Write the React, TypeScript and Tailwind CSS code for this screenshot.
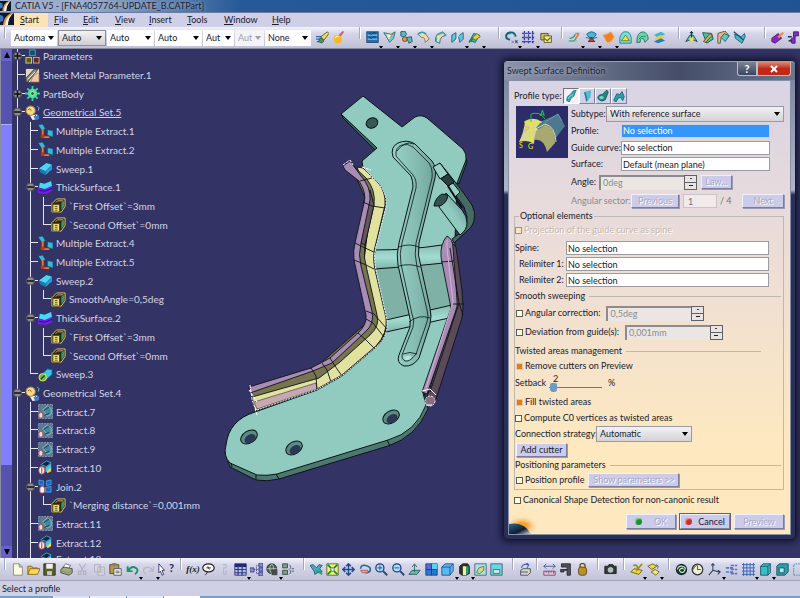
import { ReactNode } from "react";
import { clsx } from "clsx";

type Guide = "line" | "tee" | "end";

interface TreeRow {
  label:  string;
  icon:   string;
  guides: Guide[];
  knot?:  "+" | "-";
  active?: boolean;
}

const TREE: TreeRow[] = [
  { label: "Parameters",              icon: "params",  guides: ["tee"], knot: "+" },
  { label: "Sheet Metal Parameter.1", icon: "sheet",   guides: ["tee"] },
  { label: "PartBody",                icon: "gear",    guides: ["tee"], knot: "+" },
  { label: "Geometrical Set.5",       icon: "geoset",  guides: ["tee"], knot: "-", active: true },
  { label: "Multiple Extract.1",      icon: "mextract", guides: ["line", "tee"] },
  { label: "Multiple Extract.2",      icon: "mextract", guides: ["line", "tee"] },
  { label: "Sweep.1",                 icon: "sweep",   guides: ["line", "tee"] },
  { label: "ThickSurface.1",          icon: "thick",   guides: ["line", "tee"], knot: "-" },
  { label: "`First Offset`=3mm",      icon: "param",   guides: ["line", "line", "tee"] },
  { label: "`Second Offset`=0mm",     icon: "param",   guides: ["line", "line", "end"] },
  { label: "Multiple Extract.4",      icon: "mextract", guides: ["line", "tee"] },
  { label: "Multiple Extract.5",      icon: "mextract", guides: ["line", "tee"] },
  { label: "Sweep.2",                 icon: "sweep",   guides: ["line", "tee"], knot: "-" },
  { label: "SmoothAngle=0,5deg",      icon: "param",   guides: ["line", "line", "end"] },
  { label: "ThickSurface.2",          icon: "thick",   guides: ["line", "tee"], knot: "-" },
  { label: "`First Offset`=3mm",      icon: "param",   guides: ["line", "line", "tee"] },
  { label: "`Second Offset`=0mm",     icon: "param",   guides: ["line", "line", "end"] },
  { label: "Sweep.3",                 icon: "sweep3",  guides: ["line", "end"] },
  { label: "Geometrical Set.4",       icon: "geoset",  guides: ["tee"], knot: "-" },
  { label: "Extract.7",               icon: "extract", guides: ["line", "tee"] },
  { label: "Extract.8",               icon: "extract", guides: ["line", "tee"] },
  { label: "Extract.9",               icon: "extract", guides: ["line", "tee"] },
  { label: "Extract.10",              icon: "extractOn", guides: ["line", "tee"] },
  { label: "Join.2",                  icon: "join",    guides: ["line", "tee"], knot: "-" },
  { label: "`Merging distance`=0,001mm", icon: "param", guides: ["line", "line", "end"] },
  { label: "Extract.11",              icon: "extract", guides: ["line", "tee"] },
  { label: "Extract.12",              icon: "extractOn", guides: ["line", "tee"] },
];

// All glyphs are drawn on a 16x16 grid
const GLYPHS: Record<string, ReactNode> = {
  // tree
  params: <><rect x="5" y="1" width="6" height="6" fill="#164e63" stroke="#22b8b0" /><rect x="1" y="9" width="6" height="6" fill="#5a5a1a" stroke="#d8d060" /><rect x="9" y="9" width="6" height="6" fill="#5a2a1a" stroke="#e8a080" /></>,
  sheet: <><rect x="1" y="1" width="14" height="14" fill="#e8d8b8" /><path d="M1 11 10 1h4L3 15H1z" fill="#8a8a80" stroke="#3a3a30" /><path d="M8 10 13 5l2 2v8H6z" fill="#f4c4a4" stroke="#a06040" strokeWidth=".7" /><path d="m3 12 8-8" stroke="#fff" /></>,
  gear: <><path d="M8 0v16M0 8h16M2.500 2.500l11 11M13.500 2.500l-11 11" stroke="#3fd09a" strokeWidth="2" /><circle cx="8" cy="8" r="5" fill="#4fe0a8" /><circle cx="8" cy="8" r="2" fill="#1f5a50" stroke="#d8f070" /></>,
  geoset: <><path d="M5 11 8 16l6-1-1-5z" fill="#f4f4f4" /><circle cx="6" cy="6" r="5" fill="#f4d890" stroke="#a07828" /><path d="M3 5q2-2 4 1M9 9l4 4" stroke="#905810" fill="none" /><path d="m9 12 6-1v4l-4 1z" fill="#3a7ad8" /><path d="m13 1 2 2-1 3" stroke="#60c0f0" fill="none" /></>,
  mextract: <><path d="m0 1 5-1 3 5-4 2z" fill="#38b8d8" stroke="#0a4a68" strokeWidth=".7" /><path d="M5 5v9h7" stroke="#f07828" strokeWidth="2" fill="none" /><circle cx="5" cy="13" r="2" fill="#c83018" /><path d="m10 6 6 1v7l-6-2z" fill="#38b8d8" stroke="#0a4a68" strokeWidth=".7" /></>,
  sweep: <><path d="M1 8 9 2l6 2-7 7z" fill="#48d8f4" /><path d="m1 8 7 3v4l-6-3z" fill="#1c78b0" /><path d="m8 11 7-7v5l-7 6z" fill="#2898d0" /></>,
  sweep3: <><path d="M3 9 10 2l5 1v5l-8 7z" fill="#38c8e8" stroke="#106888" /><circle cx="5" cy="11" r="4" fill="#78b848" stroke="#e8e068" /><path d="m3 13 4-4" stroke="#204818" strokeWidth="1.500" /></>,
  thick: <><path d="m2 3 5 1 7-3 1 6-6 3-8-2z" fill="#48d8f4" /><path d="m0 8 6 2 9-4v6l-6 3-9-1z" fill="#7020e0" /><path d="m1 11 6 1 8-3" stroke="#2808a0" fill="none" /></>,
  param: <><path d="M1 6 6 1h9v8l-4 6H1z" fill="#2a2a10" stroke="#e0d068" /><rect x="2" y="7" width="7" height="8" fill="#f0e888" stroke="#5a4a10" /><path d="M4 9h3M4 11h3M4 13h3" stroke="#5a4a10" /><path d="m11 5 3-2v6l-3 4z" fill="#389078" /><path d="m5 5 2-2h6" stroke="#f0a080" fill="none" /></>,
  extract: <><rect x=".5" y=".5" width="15" height="15" fill="#5a7a90" stroke="#8a98b0" strokeDasharray="2 1" /><path d="m5 6 5-4 4 3v6l-4 2z" fill="#3f8a9a" stroke="#b8c8d8" strokeWidth=".7" /><path d="m6 7 6-4M7 12l5-2" stroke="#1a3a50" /><rect x="1" y="9" width="4" height="6" rx="2" fill="#f0d8d8" stroke="#a04848" strokeWidth=".7" /></>,
  extractOn: <><path d="m3 5 6-4 5 2-5 4z" fill="#102838" stroke="#38a8d8" /><path d="m8 8 6-4v5l-6 4z" fill="#48c8e8" /><path d="m9 12 5-4v4l-4 2z" fill="#f0d050" /><rect x="1" y="7" width="6" height="8" rx="3" fill="#f8f0f0" stroke="#b06060" /><path d="M4 8v6" stroke="#c02020" /></>,
  join: <><path d="m1 1 5 1v5L1 6zM9 2l5-1v5L9 7zM8 9l6-1v6H8z" fill="#1868c8" stroke="#58b8f8" strokeWidth=".7" /><rect x="2" y="8" width="5" height="7" rx="2" fill="#f8f0f0" stroke="#b06060" /></>,
  // graphic toolbar
  brush: <><path d="M0 7h9M0 10h8M1 13h8" stroke="#2868c8" strokeWidth="1.500" /><path d="m6 7 8-6 2 2-6 8z" fill="#e8d868" stroke="#5a5010" /><path d="m5 8 5 4-3 3-4-2z" fill="#489060" stroke="#204828" strokeWidth=".7" /></>,
  paint: <><path d="m7 6 6-6 2 1-5 7z" fill="#d85878" /><circle cx="7" cy="10" r="5" fill="#f8b820" /><path d="M4 9q1-3 4-2" stroke="#fff0a0" strokeWidth="1.500" fill="none" /></>,
  selection: <><rect x="1" y="1" width="14" height="13" fill="#2c6cb0" stroke="#143c68" /><path d="M2 5h12M2 10h12" stroke="#58d0f0" strokeWidth="1.500" /><path d="M4 3q3 2 4 0t4 0M4 8q3 2 4 0t4 0" stroke="#102840" fill="none" /></>,
  flag: <><path d="m1 2 9 2 5-3-2 8-5 5-2-4z" fill="#68d0c0" stroke="#286878" /><path d="m4 4 8 1-5 5z" fill="#f8f0b0" /><path d="m9 8 4-6" stroke="#d04828" /></>,
  pieces: <><path d="m1 1 5-1 2 4-3 4-4-2z" fill="#58b8c8" stroke="#204858" /><circle cx="6" cy="10" r="3" fill="#e89048" stroke="#704018" /><path d="m8 8 6-1 1 6-4 2z" fill="#58b8c8" stroke="#204858" /></>,
  sheetA: <><path d="M1 4q6-5 10 0l4 6-5 4q0-7-4-6z" fill="#f8d8a0" stroke="#607078" /><path d="M1 4q6-5 10 0" stroke="#28a0b0" strokeWidth="2" fill="none" /></>,
  sheetB: <><path d="m4 4 7-3 4 4-5 2q-3 2-3 8L2 13Q1 8 4 4z" fill="#f8d8a0" stroke="#286068" /><path d="m4 5 7-3 4 4M3 8v5" stroke="#28b0b8" strokeWidth="1.500" fill="none" /></>,
  mirror: <><path d="m1 5 5-3v8l-5 4zM9 6l6-4v8l-4 4z" fill="#58c8e0" stroke="#205878" /><path d="m6 13 4-9" stroke="#e0f8ff" /></>,
  blend: <><path d="m2 12 5-9 7 2-5 9z" fill="#38b0c0" stroke="#186068" /><path d="m5 9 6-6 4 4-6 4z" fill="#f0d030" stroke="#487018" /><path d="M1 14q4-2 5-6" stroke="#308028" strokeWidth="2" fill="none" /></>,
  rotate: <><path d="M13 7Q12 1 6 2T2 9l4 2" stroke="#186078" strokeWidth="2.500" fill="none" /><path d="M5 5q4-4 7 1" stroke="#48c0e0" fill="none" /><path d="m8 12 3 3m0-3-3 3m5 0v-4l2 4v-4" stroke="#5060a0" strokeWidth=".8" /></>,
  dots: <path d="M3 0v16M8 0v16M13 0v16M0 3h16M0 8h16M0 13h16" stroke="#3840a0" strokeWidth="1.600" strokeDasharray="3 1" />,
  snap: <><path d="M1 3h9v8H1z" fill="#c8c050" stroke="#48480c" /><path d="M5 6h9v8H5z" fill="#f4f0a0" stroke="#48480c" /><path d="m5 9 4 3 4-4" stroke="#806010" strokeWidth="1.500" fill="none" /></>,
  sketch: <><path d="M1 12q8 2 9-4M2 9q5 0 7-5" stroke="#289878" strokeWidth="1.500" fill="none" /><path d="M9 3h5M13 4l-4 6" stroke="#d08048" strokeWidth="2" /><path d="m3 13 8-1" stroke="#70c878" /></>,
  revolve: <><path d="M2 4q6-6 12 0l-3 4H5z" fill="#48b8d8" stroke="#185878" /><path d="m4 13 4-5 4 5z" fill="#c04828" stroke="#601808" /><path d="M1 8q7 3 14 0" stroke="#185878" fill="none" /></>,
  orange: <path d="M1 5q6-1 10-4l4 6q-3 8-9 7z" fill="#f08020" stroke="#f8b060" />,
  dome: <><path d="M1 15V8q3-8 7-7 5-1 7 7v7z" fill="#78e0d8" stroke="#187888" /><path d="m3 12 5-7 5 7z" fill="#f0e040" stroke="#607818" /></>,
  domeB: <><path d="M1 14q0-13 8-13 6 2 6 9l-4 4q-1-6-4-5-2 1-2 5z" fill="#68d8a0" stroke="#186850" /><path d="M4 10q2-5 8-3" stroke="#187888" fill="none" /></>,
  stripes: <><path d="m1 5 9-4 5 3-9 4z" fill="#38b8d8" /><path d="m1 9 9-4 5 3-9 4z" fill="#f0d030" /><path d="m1 13 9-4 5 3-9 3z" fill="#2878c0" /></>,
  axis: <><path d="m1 13 5-8h4l5 8-7-3z" fill="#58c8c8" stroke="#183848" /><circle cx="8" cy="10" r="2.500" fill="#f0e040" /><path d="M8 0v8M6 2h4" stroke="#183848" strokeWidth="1.300" /></>,
  trimA: <><path d="m2 2 11 1 2 7-8 5z" fill="#48c0b0" stroke="#184840" /><path d="m3 13 8-10 3 2-8 9z" fill="#d8b048" stroke="#584010" /></>,
  trimB: <><path d="m1 3 9-3 5 6-5 3-5-1-1 7H1z" fill="#f0b080" stroke="#305850" /><path d="m5 8 4-5 6 3-5 7z" fill="#58c8c0" stroke="#185868" /></>,
  trimC: <><path d="m2 4 8 3 4-4 1 4-4 8-8-6z" fill="#48b8d0" stroke="#185068" /><path d="m1 1 12 10" stroke="#185068" strokeWidth="1.500" /></>,
  purple: <><path d="m1 9 8-6 4 6-8 6-4-2z" fill="#8828c0" stroke="#401068" /><path d="m8 7 6-6 2 2-6 6z" fill="#f09048" /></>,
  purpleB: <><path d="M8 1h6v5h-4v9H6q-4-5 2-7z" fill="#8030c0" stroke="#401068" /><path d="M1 7h5M2 12h4" stroke="#203860" strokeWidth="2" /></>,
  // standard toolbar
  newDoc: <path d="M3 1h7l4 4v10H3z M10 1v4h4" fill="#fffce0" stroke="#808060" />,
  open: <><path d="M1 14V4h5l1 2h6v3" fill="#e8b830" stroke="#806010" /><path d="m1 14 3-7h12l-3 7z" fill="#f8d858" stroke="#806010" /></>,
  save: <><path d="M1 1h14v14H1z" fill="#586028" stroke="#202808" /><path d="M4 1h8v6H4z" fill="#f0f0f0" /><path d="M5 10h6v5H5z" fill="#c8c8d0" /></>,
  print: <><path d="m3 6 4-5 6 2-3 5z" fill="#fff" stroke="#606060" /><path d="m1 8 4-3 10 2v5l-4 3-10-3z" fill="#a8a888" stroke="#404030" /><path d="m2 10 9 2 4-4" stroke="#60a050" fill="none" /></>,
  cut: <path d="m4 1 5 9m3-9L6 10M3 10h3v4H3zm6 0h3v4H9z" fill="none" stroke="#b0b0c0" strokeWidth="1.300" />,
  copy: <path d="M2 2h7v9H2zM6 5h8v10H6zM8 8h4M8 11h4" fill="#d8d8e0" stroke="#a8a8b8" />,
  paste: <><path d="M1 2h11v11H1z" fill="#b89848" stroke="#504010" /><path d="M4 0h5v4H4z" fill="#808080" /><path d="M6 7h9v8H6z" fill="#f8f8e8" stroke="#404060" /><path d="M8 10h5M8 12h5" stroke="#404060" /></>,
  undo: <path d="M2 4v6h6M3 9q4-6 9-3t-1 8" fill="none" stroke="#209070" strokeWidth="2.300" />,
  redo: <path d="M14 4v6H8m5-1Q9 3 4 6t1 8" fill="none" stroke="#b8b8c8" strokeWidth="1.600" />,
  help: <path d="m1 1 7 8H5l2 5-2 1-2-5-2 2z" fill="#fff" stroke="#202060" />,
  chat: <><ellipse cx="8" cy="6" rx="7" ry="5" fill="#fff" stroke="#202020" strokeWidth="1.500" /><path d="m7 11-3 4M5 6h6M7 4l2 4" stroke="#202020" /></>,
  clip: <path d="M6 2h4v4H7v8h3V9" fill="none" stroke="#b0b0c0" />,
  table: <><path d="M1 1h14v14H1z" fill="#b8c0e8" stroke="#202868" /><path d="M1 1h14v4H1z" fill="#202878" /><path d="M1 8h14M1 12h14M5 3v12M10 3v12" stroke="#303890" strokeWidth="1.500" /></>,
  graph: <><path d="M4 8h4M12 3H8v10h4M8 8h4" fill="none" stroke="#4048a0" strokeDasharray="2 1" /><path d="M0 6h5v5H0zM11 0h5v5h-5zM11 6h5v4h-5zM11 11h5v5h-5z" fill="#8890c8" stroke="#303880" /></>,
  globeLock: <><circle cx="7" cy="7" r="6" fill="#486058" stroke="#202020" /><path d="M1 7h12M7 1q-5 6 0 12M7 1q5 6 0 12" stroke="#c0d0c0" fill="none" /><path d="M7 8h7v7H7z" fill="#484848" /></>,
  equiv: <><path d="M2 1h6v5H2zM2 9h6v5H2z" fill="#80a088" stroke="#284838" /><path d="M10 2q4 3 0 6 4 3 0 6M13 7h3M13 10h3" fill="none" stroke="#405068" /></>,
  fly: <><path d="m0 3 4-1 4 4 3-4 4 1-3 4 3 4-6 1-3 2-1-4z" fill="#48a8c0" stroke="#185070" /><path d="m8 9 7 5" stroke="#20a060" strokeWidth="2" /></>,
  fit: <><path d="M1 1h14v14H1z" fill="#f0f078" stroke="#506018" /><path d="m2 2 4 4m8-4-4 4M2 14l4-4m8 4-4-4" stroke="#208030" strokeWidth="2" /><path d="M6 6h4v4H6z" fill="#fff" stroke="#208030" /></>,
  pan: <path d="M8 1v14M1 8h14M5 4l3-3 3 3M5 12l3 3 3-3M4 5 1 8l3 3m8-6 3 3-3 3" fill="none" stroke="#204890" strokeWidth="1.800" />,
  orbit: <><path d="M2 7q0-5 6-4t6 5-6 4" fill="none" stroke="#286890" strokeWidth="2" /><path d="M2 9h9v3H4z" fill="#f0a0a0" stroke="#883030" strokeWidth=".7" /></>,
  zoomIn: <><circle cx="6" cy="6" r="5" fill="#a8e0f8" stroke="#203880" strokeWidth="1.500" /><path d="M3 6h6M6 3v6" stroke="#203880" /><path d="m10 10 5 5" stroke="#284878" strokeWidth="2.500" /></>,
  zoomOut: <><circle cx="6" cy="6" r="5" fill="#a8e0f8" stroke="#203880" strokeWidth="1.500" /><path d="M3 6h6" stroke="#203880" /><path d="m10 10 5 5" stroke="#284878" strokeWidth="2.500" /></>,
  normal: <><path d="m1 14 4-5h10l-4 5z" fill="#68b8b0" stroke="#205858" /><path d="M8 11V2M5 5l3-4 3 4" stroke="#205858" fill="none" /></>,
  multi: <><path d="M1 1h14v14H1z" fill="#2878d8" stroke="#183878" /><path d="M8 1h7v7H8z" fill="#58d0f0" /><path d="M2 2h5v5H2z" fill="#7858d0" /><path d="M1 8h14M8 1v14" stroke="#183878" /></>,
  cube: <path d="m1 5 4-4h10v9l-4 5H1zM1 5h10v10M11 5l4-4" fill="#58b8f0" stroke="#204888" />,
  shaded: <><path d="m2 4 4-3h6l2 3v9l-4 2H5l-3-2z" fill="#303020" stroke="#202018" /><path d="M6 4h4v11H6z" fill="#e8f0a8" /><path d="M10 4h3v8l-3 3z" fill="#28a080" /></>,
  viewA: <><path d="M1 1h14v14H1z" fill="#b0e0e8" stroke="#405868" /><path d="m3 12 3-6 6-2v5l-5 4z" fill="#e0d878" stroke="#288060" /></>,
  viewB: <><path d="M1 1h14v14H1z" fill="#68d8e8" stroke="#405868" /><path d="M4 8h8v5H4z" fill="#c8e8d8" stroke="#287080" /></>,
  turn: <><path d="m2 9 3-2h9v5l-3 3H2z" fill="#d8d8c8" stroke="#404040" /><path d="M3 6q2-6 8-4M9 0l3 2-2 4M2 11h9" fill="none" stroke="#3060b0" strokeWidth="1.300" /></>,
  measure: <><path d="M1 10h14v5H1z" fill="#e8c8d0" stroke="#803858" /><path d="M4 10v2M7 10v3M10 10v2M13 10v3M1 4h14M4 1 1 4l3 3m8-6 3 3-3 3" fill="none" stroke="#384898" /></>,
  caliper: <path d="M3 1h11v14h-4V9H6v2H2V8h8V5H3z" fill="#505058" stroke="#202028" />,
  weight: <><path d="M5 5V2q3-3 6 0v3" fill="none" stroke="#604010" strokeWidth="1.500" /><rect x="3" y="5" width="10" height="10" rx="3" fill="#b89028" stroke="#584008" /></>,
  camera: <><path d="M1 4h4l1-2h5l1 2h3v9H1z" fill="#383838" stroke="#181818" /><circle cx="8" cy="8.500" r="3" fill="#a0c8c8" stroke="#d0d0d0" /></>,
  layerA: <><path d="m1 11 4-4 10 2-4 5z" fill="#e8d838" stroke="#605810" /><path d="M4 3q6-2 5 5l6-7" fill="none" stroke="#a08818" strokeWidth="2" /></>,
  layerB: <><path d="m1 4 6-3 5 3-6 4z" fill="#e8d838" stroke="#605810" /><path d="m5 11 5-3 5 3-4 4z" fill="#f0e888" stroke="#605810" /><path d="M11 2q4 1 2 5" fill="none" stroke="#384880" /></>,
  swirl: <><circle cx="8" cy="8" r="7" fill="#183030" /><path d="M3 8q1-5 6-4t3 5-5 2 0-4 3 1" fill="none" stroke="#c8f0c8" strokeWidth="1.500" /></>,
  clock: <><circle cx="8" cy="8" r="6.500" fill="#f0f0d8" stroke="#303030" strokeWidth="1.500" /><path d="M8 3v5h4M3 8q0-4 4-5" stroke="#303030" fill="none" /></>,
  triad: <path d="M6 1v8l8 2M6 9l-5 6M4 3l2-2 2 2m4 6 3 2-3 3" fill="none" stroke="#304060" strokeWidth="1.300" />,
  layers: <path d="M7 3h8M7 8h8M7 13h8M1 6h9M1 11h9" stroke="#5878c0" strokeWidth="2" strokeDasharray="4 1" />,
  grid: <path d="M2 0v16M6 0v16M10 0v16M14 0v16M0 2h16M0 6h16M0 10h16M0 14h16" stroke="#3868c0" strokeWidth="1.200" />,
  box: <path d="M2 4 5 1h9v11l-3 3H2zM2 4h9v11M11 4l3-3" fill="#38c0c8" stroke="#184858" />,
  boxB: <><path d="M1 4 4 1h11v10l-4 4H1z" fill="#28a0a8" stroke="#184858" /><path d="M4 6h6v6H4z" fill="#a8f0f0" stroke="#184858" /></>,
  frame: <path d="M2 3 5 1h10M2 3v12h9" fill="none" stroke="#58a8c0" strokeWidth="1.500" strokeDasharray="2 1" />,
  // dialog profile types
  explicit: <><path d="M2 14q0-6 5-8l4-5 4-1-3 8q-5 2-6 8z" fill="#28a8b0" stroke="#0f5860" strokeWidth=".7" /><path d="M4 12q2-5 7-6" stroke="#90f0f0" fill="none" /></>,
  line: <><path d="m5 3 8-2-1 9-5 5q1-6-2-12z" fill="#38c8d8" stroke="#78a8c0" /><path d="m5 3 3 12" stroke="#208090" strokeWidth="2" /></>,
  circle: <><path d="M1 11q0-5 6-5l6-6 2 3-4 10q-6 4-10-2z" fill="#208880" stroke="#0f4850" /><ellipse cx="6" cy="10" rx="3" ry="2" fill="#78d8c8" /></>,
  conic: <path d="m1 14 4-9 4 1 3-4 3 7-2 5-3-4-3 1-3 5z" fill="#28a0a8" stroke="#0f5860" />,
};

function Glyph({ name, className }: { name: string; className: string }) {
  return (
    <svg viewBox="0 0 16 16" className={clsx("shrink-0", className)} aria-hidden="true">
      {GLYPHS[name]}
    </svg>
  );
}

// A trailing "*" marks a tool with a fly-out menu
function ToolGroup({ tools, className }: { tools: string[]; className: string }) {
  return (
    <div className={clsx("flex shrink-0 items-center justify-between", className)}>
      {tools.map((t) => {
        const name = t.replace("*", "");
        return (
          <button key={t} type="button" aria-label={name} className="relative flex size-[14px] items-center justify-center">
            {name === "fx" ? (
              <span className="font-['Liberation_Serif',serif] text-[9px] italic font-bold leading-none text-[#202020]">f(x)</span>
            ) : (
              <Glyph name={name} className="size-[13px]" />
            )}
            {name === "help" && <b className="absolute -right-0.5 top-0 text-[11px] leading-none text-[#182868]">?</b>}
            {t.endsWith("*") && (
              <svg viewBox="0 0 4 3" className="absolute -bottom-1 -right-1 h-[3px] w-1"><path d="M0 0h4L2 3z" fill="#000" /></svg>
            )}
          </button>
        );
      })}
    </div>
  );
}

function Separator() {
  return <span className="mx-1 h-3 w-0.5 shrink-0 self-start border-l border-[#a8a8bc] bg-white" />;
}

function Select({ value, label, id, className, disabled }: { value: string; label?: string; id?: string; className: string; disabled?: boolean }) {
  return (
    <span className={clsx("relative flex shrink-0", className)}>
      <select
        id={id}
        aria-label={label}
        disabled={disabled}
        className={clsx("w-full appearance-none overflow-hidden bg-transparent pl-[3px] pr-3 outline-none", disabled && "text-[#a0a0a8]")}
      >
        <option>{value}</option>
      </select>
      <svg viewBox="0 0 6 4" className="pointer-events-none absolute right-[3px] top-1/2 h-1 w-1.5 -translate-y-1/2">
        <path d="M0 0h6L3 4z" fill={disabled ? "#a0a0a8" : "#000"} />
      </svg>
    </span>
  );
}

const FORMATS = [
  { label: "Fill color",   value: "Automatic", className: "w-[46px] bg-white" },
  { label: "Transparency", value: "Auto", className: "w-[48px] border border-[#8e8e98] bg-linear-to-b from-[#f2f2f4] to-[#cfcfd4]" },
  { label: "Thickness",    value: "Auto", className: "w-[47px] bg-white" },
  { label: "Line type",    value: "Auto", className: "w-[47px] bg-white" },
  { label: "Point symbol", value: "Aut",  className: "w-[31px] bg-white" },
  { label: "Rendering",    value: "Aut",  className: "w-[29px] bg-[#f4f4f8]", disabled: true },
  { label: "Layer",        value: "None", className: "w-[46px] bg-white" },
];

const MENUS = [
  { label: "Start", className: "w-[34px] bg-[#fbe3b6]" },
  { label: "File", className: "w-[29px]" },
  { label: "Edit", className: "w-8" },
  { label: "View", className: "w-[34px]" },
  { label: "Insert", className: "w-[38px]" },
  { label: "Tools", className: "w-[37px]" },
  { label: "Window", className: "w-12" },
  { label: "Help", className: "w-8" },
];

function Logo({ className }: { className: string }) {
  return (
    <svg viewBox="0 0 14 12" preserveAspectRatio="none" className={className} aria-hidden="true">
      <path d="M0 0h14v12H0z" fill="#101828" />
      <path d="M3 12Q4 3 11 0h3q-6 4-7 12z" fill="#f09030" />
      <path d="M5 12Q6 4 12 1q-4 5-4 11z" fill="#fff" />
      <path d="M0 2q5 0 3 6L0 9z" fill="#3878c8" />
    </svg>
  );
}

function TreeGuide({ kind, knot }: { kind: Guide; knot?: "+" | "-" }) {
  return (
    <span className="relative flex w-[13px] shrink-0 self-stretch">
      <span className={clsx("w-1.5 shrink-0 border-r border-[#e4e4ee]", kind === "end" && "h-1/2")} />
      {kind !== "line" && <span className="h-1/2 grow border-b border-[#e4e4ee]" />}
      {knot && (
        <svg viewBox="0 0 9 9" className="absolute left-px top-1/2 size-[9px] -translate-y-1/2">
          <circle cx="4.500" cy="4.500" r="4" fill="#8a8a90" stroke="#50505c" />
          <path d={knot === "+" ? "M1 4.500h7M4.500 1v7" : "M1 4.500h7"} stroke="#101010" strokeWidth="1.500" />
        </svg>
      )}
    </span>
  );
}

function SpecTree() {
  return (
    <ul className="-mt-0.5 flex w-[203px] shrink-0 flex-col text-[10px] leading-none text-[#d4d4e4]">
      {TREE.map((row, i) => (
        <li key={i} className="flex min-h-0 flex-1 items-center">
          {row.guides.map((g, n) => (
            <TreeGuide key={n} kind={g} knot={n === row.guides.length - 1 ? row.knot : undefined} />
          ))}
          <Glyph name={row.icon} className="mr-[3px] size-[15px]" />
          <span className={clsx("whitespace-nowrap", row.active && "underline")}>{row.label}</span>
        </li>
      ))}
      {/* next row, cut off by the toolbar */}
      <li className="flex h-1.5 flex-none items-start">
        <TreeGuide kind="line" />
        <TreeGuide kind="line" />
        <Glyph name="extractOn" className="mr-[3px] size-[15px]" />
        <span className="pt-0.5">Extract.13</span>
      </li>
    </ul>
  );
}

function ScrollBar() {
  return (
    <div className="flex w-3 shrink-0 flex-col border-l border-[#8c8ca0] bg-[#5652b0]">
      <button type="button" aria-label="Scroll up" className="flex h-3 items-center justify-center bg-[#6664c8]">
        <svg viewBox="0 0 8 8" className="size-1.5"><path d="M4 0 8 8H0z" fill="#000" /></svg>
      </button>
      <span className="flex-[63]" />
      <span className="flex-[342] border-t border-[#b0b0ff] bg-[#8080ff]" />
      <span className="flex-[81]" />
      <button type="button" aria-label="Scroll down" className="flex h-3 items-center justify-center bg-[#6664c8]">
        <svg viewBox="0 0 8 8" className="size-1.5"><path d="M0 0h8L4 8z" fill="#000" /></svg>
      </button>
    </div>
  );
}

function Part() {
  return (
    <svg viewBox="215 88 265 400" className="mt-[39px] h-[400px] w-[265px] shrink-0" aria-label="Bracket model" role="img">
      <defs>
        <linearGradient id="bend" x1="0" y1="0" x2="0" y2="1">
          <stop offset="0" stopColor="#86bdb2" /><stop offset=".5" stopColor="#a4dcd2" /><stop offset="1" stopColor="#7fb5aa" />
        </linearGradient>
        <linearGradient id="rib" x1="0" y1="0" x2="1" y2="0">
          <stop offset="0" stopColor="#98d2c7" /><stop offset=".6" stopColor="#83bab0" /><stop offset="1" stopColor="#6fa39a" />
        </linearGradient>
        <linearGradient id="tube" x1="0" y1="1" x2="1" y2="0">
          <stop offset="0" stopColor="#8cc8bc" /><stop offset=".5" stopColor="#8fcabf" /><stop offset="1" stopColor="#5c8a84" />
        </linearGradient>
      </defs>
      <g stroke="#0c1414" strokeWidth="1" strokeLinejoin="round">
        {/* plate thickness */}
        <path d="M225 453 230 467 256 480Q267 482 279 479L388 446Q416 437 428 409L424 392 230 440z" fill="#4c7870" />
        <path d="m341 114 2 4 33 33 2-3zM466 158l1 4-8 22-4-3z" fill="#3c645e" />
        {/* plate */}
        <path d="M341 114 363 96 402 127 415 117Q421 114 427 118L463 149Q467 154 466 160L457 183 455 240 452 307 423 393 426 405Q416 432 388 440L277 474Q267 476 257 475L230 463Q223 456 226 445 229 420 255 412L317 390 342 376 375 348Q388 338 386 320L375 270Q371 255 376 243L385 207Q387 198 383 193L363 168 362 161 377 148z" fill="#91cabf" />
        <path d="M276 474l3 5M387 440l3 6M231 463l1 4M256 475v5" fill="none" />
        {/* bends */}
        <path d="M373 268 450 263 455 306 387 320z" fill="#7fb1a6" stroke="none" />
        <path d="M373 250Q410 250 442 245L444 263Q408 267 374 269z" fill="url(#bend)" />
        <path d="M386 320 452 305 449 318 386 332z" fill="url(#bend)" />
      </g>
      {/* stiffening rib */}
      <path d="M393 157Q390 147 398 143 407 139 415 144L432 161Q437 168 435 178L419 243Q417 255 421 267L430 308Q432 316 430 324L419 358Q413 367 404 366 396 363 399 355L410 327Q411 320 409 314L398 265Q396 255 399 243L413 187Q413 181 411 176z" fill="url(#rib)" stroke="#0c1414" />
      <path d="M396 156Q395 147 402 145 408 143 413 147L429 163Q433 169 432 178L416 243Q414 254 417 267L427 310Q429 316 427 322L416 354Q410 362 405 361 401 359 402 355L413 327Q415 320 412 314L401 264Q399 254 402 243L416 188Q417 180 413 175z" fill="none" stroke="#0c1414" strokeWidth=".8" />
      <path d="M397 151Q405 140 414 144M403 354q7-3 14 0M399 247q10-4 20 0M399 266q11-3 21 1M409 322q10-8 21-4" fill="none" stroke="#0c1414" strokeWidth=".8" />
      <path d="M404 357q5-3 8 0l-3 3h-4z" fill="#b0e4da" />
      {/* side hook */}
      <g stroke="#0c1414" strokeWidth="1" strokeLinejoin="round">
        <path d="m435 167 5-4 20 25 12 17q4 7 2 16-2 7-7 10l-13 12-2-4 12-9q4-6 3-13l-3-10z" fill="#456b65" />
        <path d="m446 193-7 14 21 28q7-5 7-12 0-7-5-13z" fill="url(#tube)" />
        <path d="m433 167 7-4 8 11-8 5zM448 186l5-3 7 9-5 5z" fill="#98d2c7" />
        <path d="m441 179 7-5 6 8-6 4z" fill="#27403f" />
        <path d="m448 186 14 22" strokeWidth="2" />
        <path d="m434 206q1-8 8-12l6 1q-1 8-8 11z" fill="#34524f" />
        <ellipse cx="372" cy="123" rx="6" ry="5" transform="rotate(-25 372 123)" fill="#355853" />
      </g>
      {/* left flange */}
      <g stroke="#0c1414" strokeWidth=".9" strokeLinejoin="round">
        <path d="M357 167 363 168 378 183Q386 192 385 205L376 243Q372 255 375 270L386 318Q388 333 376 346L342 375 317 389 255 411 252 396 315 376 338 360 368 333 364 260 371 205z" fill="#e2e2a0" />
        <path d="M350 163 366 178Q376 190 374 205L365 245Q363 258 367 270L377 315Q380 326 370 335L340 362 319 378 252 397 250 390 313 370 370 320 357 260 366 200z" fill="#77744f" />
        <path d="M370 190 374 205 365 245 361 243z" fill="#66555f" />
        <path d="M343 166 350 161 361 176Q371 187 370 200L361 243Q358 255 361 266L372 311Q374 320 369 328L361 336 332 363 313 371 250 393 249 387 311 368 330 358 358 333Q367 325 366 315L354 260Q353 250 355 243L364 203Q367 193 359 181L345 170z" fill="#a98bb8" />
        <path d="m254 402 62-19 1 6-60 20z" fill="#c8a8b0" strokeWidth=".5" />
        <path d="M355 243 363 247 376 253M354 260 364 264 374 269M363 202 372 206 385 208M360 181 372 178M366 311 374 314 387 329M366 319 373 323 384 337M358 333 366 340 374 348M330 358 335 366 342 376M322 363 327 370 331 382M311 368 316 376 317 390" fill="none" />
      </g>
      <path d="M257 410 318 389 343 375 376 347Q389 335 387 320L376 270Q373 255 377 243L386 207Q387 195 381 187L364 168" fill="none" stroke="#f4e8f4" strokeWidth="1" strokeDasharray="2 1" />
      <path d="m343 165 7-5 3 5M250 385l2 14 5 16M249 390l8 12M362 167l9 3" fill="none" stroke="#fff" strokeDasharray="3 1" />
      {/* right flange */}
      <g stroke="#0c1414" strokeWidth=".9" strokeLinejoin="round">
        <path d="M450 240 456 247 462 290 463 308 462 318 436 399 427 397 455 307z" fill="#5b4a58" />
        <path d="M447 236Q453 239 453 248L457 300Q458 306 455 313L427 394 422 392 451 308 441 257Q440 244 447 236z" fill="#a98bb8" />
        <path d="M450 248 459 303 430 392M452 304h12M441 262l13-1M459 303l4 12" fill="none" />
      </g>
      <path d="M447 240v8L453 302 426 388" fill="none" stroke="#d4b4d4" strokeWidth="1" />
      <circle cx="430" cy="401" r="5" fill="#876f80" stroke="#f4e8f4" strokeDasharray="2 1" />
      <path d="m422 391 8-2 6 6M426 405h6" fill="none" stroke="#fff" />
      {/* drilled holes */}
      {[[249, 437], [294, 448], [391, 417]].map(([x, y]) => (
        <g key={x} transform={`rotate(-32 ${x} ${y})`}>
          <ellipse cx={x} cy={y} rx="9" ry="6" fill="#5d8a83" stroke="#0c1414" />
          <ellipse cx={x} cy={y + 2} rx="6" ry="4" fill="#2b3855" />
        </g>
      ))}
    </svg>
  );
}

const BUTTON = "flex items-center justify-center border border-t-[#f0f0fc] border-l-[#f0f0fc] border-b-[#7c7ca0] border-r-[#7c7ca0] bg-[#ccccea] shadow-[1px_1px_0_#9a9ab0]";
const EMBOSSED = "text-[#a8a8c4] [text-shadow:1px_1px_0_#fff]";

function Field({ label, value, selected, labelClass }: { label: string; value: string; selected?: boolean; labelClass: string }) {
  return (
    <label className="flex h-full items-center pr-[14px]">
      <span className={clsx("shrink-0 whitespace-nowrap", labelClass)}>{label}</span>
      <input
        type="text"
        defaultValue={value}
        className={clsx("h-[14px] min-w-0 flex-1 border px-px outline-none", selected ? "border-[#c8d4e8] bg-[#3596fa] text-white" : "border-[#9a9aa4] bg-white")}
      />
    </label>
  );
}

function Spinner({ id, value }: { id: string; value: string }) {
  return (
    <span className="flex h-[15px] w-[98px] shrink-0">
      <input id={id} aria-label={id} type="text" disabled defaultValue={value} className="min-w-0 flex-1 border-l-2 border-t-2 border-[#8c8c90] bg-[#ebe6e2] px-0.5 text-[#8c8c90]" />
      <span className="flex w-[13px] flex-col border border-[#606068] bg-[#e8e4e2]">
        <button type="button" disabled aria-label="Increase" className="flex flex-1 items-center justify-center border-b border-[#606068]">
          <span className="h-px w-0.5 bg-[#404040]" />
        </button>
        <button type="button" disabled aria-label="Decrease" className="flex flex-1 items-center justify-center">
          <span className="h-px w-1 bg-[#202020]" />
        </button>
      </span>
    </span>
  );
}

function Check({ label, checked, disabled }: { label: string; checked?: boolean; disabled?: boolean }) {
  return (
    <label className={clsx("flex items-center gap-0.5 whitespace-nowrap", disabled && "text-[#c4b8b0] [text-shadow:1px_1px_0_#fff]")}>
      <input
        type="checkbox"
        defaultChecked={checked}
        disabled={disabled}
        className="size-[7px] shrink-0 appearance-none border border-[#5c5c50] bg-[#fdfbe0] checked:border-[#e8c8a0] checked:bg-[#e07c20] disabled:border-[#a09078] disabled:bg-[#f8e4c4]"
      />
      {label}
    </label>
  );
}

function GroupTitle({ children }: { children: ReactNode }) {
  return (
    <div className="flex h-full items-center gap-1 whitespace-nowrap">
      {children}
      <span className="mr-0.5 h-px flex-1 bg-[#bcb8b8]" />
    </div>
  );
}

function SweepPreview() {
  return (
    <svg viewBox="0 0 52 52" className="size-[52px] shrink-0" aria-hidden="true">
      <path d="M0 0h52v52H0z" fill="#2c2c68" />
      <path d="M3 36Q8 26 9 15q9-5 17 1l-4 10q-4 6-4 12-6-5-15-2z" fill="#d8d890" />
      <path d="M26 15 42 8l7 12-10 13q-6-9-15-8l-4-3z" fill="#4c7890" />
      <path d="m20 25 9-6q10 2 10 18l-8 9q-3-14-13-12z" fill="#a8a870" />
      <path d="m18 24 11-6q10 2 11 18" fill="none" stroke="#e0e0a0" />
      <path d="m29 16 13-8 4 7" fill="none" stroke="#7098a8" />
      <path d="M8 16h18M15 16v17" stroke="#f0f000" strokeWidth="1" />
      <path d="M15 8q9-3 14 5M15 8v8" fill="none" stroke="#20c040" />
      <circle cx="15" cy="34" r="1.500" fill="#f0f000" />
      <g fontSize="7">
        <text x="24" y="10" fill="#20e040">A</text>
        <text x="9" y="26" fill="#e0b060">P</text>
        <text x="3" y="42" fill="#f0f000">S</text>
        <text x="12" y="43" fill="#f0f000">G</text>
      </g>
    </svg>
  );
}

function SweptSurfaceDialog() {
  return (
    <section
      role="dialog"
      aria-labelledby="dialog-title"
      className="absolute right-1 top-[11px] w-[293px] rounded-[5px] border border-[#16182c] bg-linear-to-b from-[#77809a] via-[#b0b6c8] via-27% to-[#2a2f58] to-28% px-1 pb-1 text-[9px] leading-[12px] text-[#20202c] shadow-[0_0_6px_2px_#14142c]"
    >
      <header className="-mx-1 flex h-[19px] items-start rounded-t-[4px] border-t border-[#9aa2b8] bg-linear-to-r from-[#8b94ab] via-[#454d68] via-60% to-[#6a7590] pl-[3px] pr-1">
        <h2 id="dialog-title" className="flex-1 self-center [text-shadow:0_0_4px_#c0c8d8]">Swept Surface Definition</h2>
        <button type="button" aria-label="Help" className="h-[14px] w-5 rounded-bl-[3px] border border-t-0 border-[#b8c0d0] bg-linear-to-b from-[#7c8498] to-[#3c4460] text-[11px] font-bold leading-[12px] text-white">?</button>
        <button type="button" aria-label="Close" className="flex h-[14px] w-[34px] items-center justify-center rounded-br-[3px] border border-t-0 border-[#d8b0a8] bg-linear-to-b from-[#d88878] to-[#c02818] to-50%">
          <svg viewBox="0 0 8 8" className="size-2"><path d="m1 1 6 6M7 1 1 7" stroke="#fff" strokeWidth="2" /></svg>
        </button>
      </header>

      <div className="relative border border-[#8890a8] bg-linear-to-b from-[#d8d4e4] via-[#ebdcd8] via-35% to-[#fde8c0] to-80% pb-[5px] pl-[5px] pr-1.5 pt-1.5">
        <div className="flex h-[17px] items-center">
          <span className="w-[49px]">Profile type:</span>
          {["explicit", "line", "circle", "conic"].map((p) => (
            <button
              key={p}
              type="button"
              aria-label={p}
              className={clsx("flex h-4 w-4 items-center justify-center border", p === "explicit" ? "border-t-[#707080] border-l-[#707080] border-b-white border-r-white bg-[#f4f0f4]" : "border-t-white border-l-white border-b-[#8080a0] border-r-[#8080a0] bg-[#d0d0ea]")}
            >
              <Glyph name={p} className="size-3" />
            </button>
          ))}
        </div>

        <div className="mt-0.5 flex gap-[3px] pl-0.5">
          <SweepPreview />
          <div className="flex-1">
            <div className="flex h-4 items-center">
              <label htmlFor="subtype" className="w-[35px]">Subtype:</label>
              <Select id="subtype" value="With reference surface" className="h-4 flex-1 border border-[#9a9aa4] bg-linear-to-b from-[#f2f2f4] to-[#d4d4d8]" />
            </div>
            <div className="h-[17px]"><Field label="Profile:" value="No selection" selected labelClass="w-[50px]" /></div>
            <div className="h-[17px]"><Field label="Guide curve:" value="No selection" labelClass="w-[50px]" /></div>
            <div className="h-4"><Field label="Surface:" value="Default (mean plane)" labelClass="w-[50px]" /></div>
            <div className="flex h-5 items-center">
              <label htmlFor="angle" className="w-7">Angle:</label>
              <Spinner id="angle" value="0deg" />
              <button type="button" disabled className={clsx(BUTTON, EMBOSSED, "ml-1 h-[14px] w-[31px]")}>Law...</button>
            </div>
            <div className="flex h-[18px] items-center">
              <label htmlFor="sector" className="w-[60px] whitespace-nowrap text-[#8c8890]">Angular sector:</label>
              <button type="button" disabled className={clsx(BUTTON, EMBOSSED, "h-[14px] w-12")}>Previous</button>
              <input id="sector" type="text" disabled defaultValue="1" className="ml-1 h-[14px] w-[34px] border border-[#c8c4c8] bg-[#f0eaea] px-1 text-[#707078]" />
              <span className="ml-[3px] flex-1 text-[#707078]">/ 4</span>
              <button type="button" disabled className={clsx(BUTTON, EMBOSSED, "h-[14px] w-[42px]")}>Next</button>
            </div>
          </div>
        </div>

        <fieldset className="border border-[#bcb8b8] pb-px">
          <legend className="ml-1 h-3 px-px">Optional elements</legend>
          <div className="h-4 pt-0.5"><Check label="Projection of the guide curve as spine" disabled /></div>
          <div className="mt-0.5 h-4"><Field label="Spine:" value="No selection" labelClass="w-[51px]" /></div>
          <div className="h-4"><Field label="Relimiter 1:" value="No selection" labelClass="w-[51px] pl-1" /></div>
          <div className="h-4"><Field label="Relimiter 2:" value="No selection" labelClass="w-[51px] pl-1" /></div>
          <div className="h-4"><GroupTitle>Smooth sweeping</GroupTitle></div>
          <div className="flex h-[18px] items-center gap-1.5 pl-px">
            <Check label="Angular correction:" />
            <Spinner id="angular" value="0,5deg" />
          </div>
          <div className="flex h-5 items-center gap-1.5 pl-px">
            <Check label="Deviation from guide(s):" />
            <Spinner id="deviation" value="0,001mm" />
          </div>
          <div className="h-[18px] pr-5"><GroupTitle>Twisted areas management</GroupTitle></div>
          <div className="flex h-3 items-center pl-px"><Check label="Remove cutters on Preview" checked /></div>
          <div className="flex h-[22px] items-center">
            <label htmlFor="setback" className="w-[34px]">Setback</label>
            <span className="flex w-[53px] flex-col">
              <output htmlFor="setback" className="h-2 pl-1 leading-[8px]">2</output>
              <input
                id="setback"
                type="range"
                defaultValue={2}
                className="h-2 w-full appearance-none bg-[linear-gradient(#70747c,#70747c)] bg-[length:100%_1px] bg-center bg-no-repeat [&::-webkit-slider-thumb]:h-[9px] [&::-webkit-slider-thumb]:w-[7px] [&::-webkit-slider-thumb]:appearance-none [&::-webkit-slider-thumb]:rounded-t-[2px] [&::-webkit-slider-thumb]:rounded-b-[3px] [&::-webkit-slider-thumb]:bg-[#6a9cc4]"
              />
            </span>
            <span className="ml-1.5">%</span>
          </div>
          <div className="flex h-4 items-center pl-px"><Check label="Fill twisted areas" checked /></div>
          <div className="flex h-4 items-center"><Check label="Compute C0 vertices as twisted areas" /></div>
          <div className="flex h-4 items-center">
            <label htmlFor="strategy" className="w-[81px] whitespace-nowrap">Connection strategy:</label>
            <Select id="strategy" value="Automatic" className="h-4 w-24 border border-[#9a9aa4] bg-linear-to-b from-[#f2f2f4] to-[#d4d4d8]" />
          </div>
          <div className="h-4 pl-px pt-px"><button type="button" className={clsx(BUTTON, "h-[14px] w-[51px]")}>Add cutter</button></div>
          <div className="h-[14px]"><GroupTitle>Positioning parameters</GroupTitle></div>
          <div className="flex h-4 items-center gap-1 pl-px">
            <Check label="Position profile" />
            <button type="button" disabled className={clsx(BUTTON, EMBOSSED, "h-[14px] w-[91px]")}>Show parameters &gt;&gt;</button>
          </div>
        </fieldset>

        <div className="mt-0.5 flex h-4 items-center"><Check label="Canonical Shape Detection for non-canonic result" /></div>

        <footer className="mt-1.5 flex h-[15px] justify-end gap-1">
          <button type="button" disabled className={clsx(BUTTON, EMBOSSED, "w-[50px] gap-3")}>
            <span className="size-[7px] rounded-full bg-[#189028] shadow-[inset_1px_1px_1px_#80e080]" />OK
          </button>
          <button type="button" className={clsx(BUTTON, "w-[50px] gap-1.5 outline outline-[#606078]")}>
            <span className="size-[7px] rounded-full bg-[#c83030] shadow-[inset_1px_1px_1px_#f0a0a0]" />Cancel
          </button>
          <button type="button" disabled className={clsx(BUTTON, EMBOSSED, "w-[50px]")}>Preview</button>
        </footer>

        <svg viewBox="0 0 32 20" className="pointer-events-none absolute bottom-0 left-0 h-5 w-8" aria-hidden="true">
          <defs>
            <radialGradient id="glow" cx=".4" cy=".6" r=".55">
              <stop offset=".3" stopColor="#f4a030" /><stop offset="1" stopColor="#fde8c0" stopOpacity="0" />
            </radialGradient>
            <linearGradient id="earth" x1="0" y1="0" x2="1" y2="1">
              <stop offset="0" stopColor="#2c6890" /><stop offset=".6" stopColor="#101c30" /><stop offset="1" stopColor="#c8e0f0" />
            </linearGradient>
          </defs>
          <path d="M0 0h32v20H0z" fill="url(#glow)" />
          <path d="M0 10q15-3 22 10H0z" fill="url(#earth)" />
        </svg>
      </div>
    </section>
  );
}

export default function App() {
  return (
    <div className="flex h-screen flex-col overflow-hidden bg-[#333366] font-[Lato,'Open_Sans',sans-serif] text-[9px] leading-[12px] text-[#20202c]">
      <header className="flex h-[13px] shrink-0 items-center gap-1 border-b border-[#6a7aa0] bg-linear-to-r from-[#9aaccc] from-10% via-[#265a96] via-30% to-[#205490]">
        <Logo className="h-[10px] w-[11px]" />
        <h1 className="whitespace-nowrap [text-shadow:0_0_4px_#b8c8e0]">CATIA V5 - [FNA4057764-UPDATE_B.CATPart]</h1>
      </header>

      <nav className="flex h-[14px] shrink-0 items-stretch bg-[#cfcfe8]">
        <Logo className="h-3 w-[14px]" />
        {MENUS.map((m) => (
          <button key={m.label} type="button" className={clsx("pl-1.5 text-left", m.className)}>
            <span className="underline">{m.label[0]}</span>{m.label.slice(1)}
          </button>
        ))}
      </nav>

      <div className="flex h-[22px] shrink-0 items-center overflow-hidden border-b border-[#8888a0] bg-linear-to-b from-[#f4f4fc] via-[#d6d6ea] via-30% to-[#c0c0d4]">
        <Separator />
        <div className="ml-px flex h-4 shrink-0 gap-px">
          {FORMATS.map((f) => <Select key={f.label} {...f} />)}
        </div>
        <ToolGroup tools={["brush", "paint"]} className="ml-1 mr-2.5 w-[30px]" />
        <Separator />
        <ToolGroup tools={["selection*", "flag*", "pieces*", "sheetA*", "sheetB", "mirror*", "blend*"]} className="mr-3 w-[117px]" />
        <Separator />
        <ToolGroup tools={["rotate*", "dots*", "snap"]} className="mr-1 w-[49px]" />
        <Separator />
        <ToolGroup tools={["sketch*", "revolve*", "orange*", "dome", "domeB", "stripes"]} className="mr-2 w-[99px]" />
        <Separator />
        <ToolGroup tools={["axis", "trimA", "trimB", "trimC"]} className="mr-3.5 w-[62px]" />
        <Separator />
        <ToolGroup tools={["purple", "purpleB"]} className="w-[30px]" />
      </div>

      <main className="relative flex min-h-0 flex-1 overflow-hidden">
        <ScrollBar />
        <SpecTree />
        <Part />
        <SweptSurfaceDialog />
      </main>

      <div className="flex h-[23px] shrink-0 items-center overflow-hidden border-b border-[#a0a0b8] bg-linear-to-b from-[#f4f4fc] via-[#d6d6ea] via-30% to-[#c4c4d8]">
        <Separator />
        <ToolGroup tools={["newDoc", "open", "save", "print", "cut", "copy", "paste", "undo*", "redo*", "help"]} className="mr-1 w-[162px]" />
        <Separator />
        <ToolGroup tools={["fx", "chat", "clip", "table*", "graph", "globeLock*", "equiv"]} className="mr-1 w-[109px]" />
        <Separator />
        <ToolGroup tools={["fly", "fit", "pan", "orbit", "zoomIn", "zoomOut", "normal", "multi", "cube*", "shaded*", "viewA", "viewB"]} className="mr-1 w-[195px]" />
        <Separator />
        <ToolGroup tools={["turn"]} className="w-[14px]" />
        <Separator />
        <ToolGroup tools={["measure", "caliper", "weight"]} className="mr-1 w-[47px]" />
        <Separator />
        <ToolGroup tools={["camera"]} className="mr-0.5 w-[14px]" />
        <Separator />
        <ToolGroup tools={["layerA*", "layerB*"]} className="mr-1 w-[31px]" />
        <Separator />
        <ToolGroup tools={["swirl", "clock", "triad*", "layers", "grid*", "box*", "boxB", "frame"]} className="w-[132px]" />
      </div>

      <footer className="h-[15px] shrink-0 bg-[#cfcfe6] px-0.5 leading-[15px]">Select a profile</footer>
      <div className="flex h-0.5 shrink-0 gap-px bg-[#78a0c8] pl-[53px]">
        <span className="w-9 bg-[#d8e4f0]" />
        <span className="w-9 bg-[#e8f0f8]" />
        <span className="w-9 bg-[#e8f0f8]" />
        <span className="w-9 bg-white" />
      </div>
    </div>
  );
}
